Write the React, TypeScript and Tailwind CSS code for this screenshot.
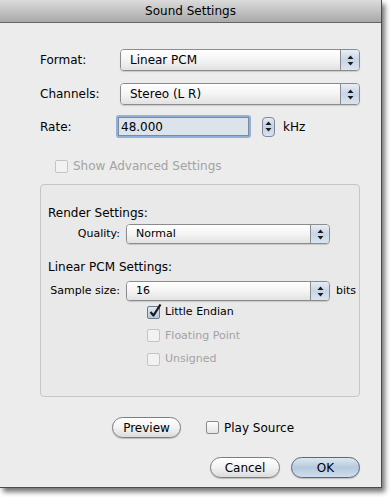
import React from "react";

const ui = "font-['Lucida_Grande','DejaVu_Sans',sans-serif]";

function Arrows({ size = 6 }: { size?: number }) {
  return (
    <svg width={size + 1} height={11} viewBox="0 0 7 11">
      <path d="M3.5 0.5 L6.5 4 L0.5 4 Z" fill="#1c1c1c" />
      <path d="M0.5 7 L6.5 7 L3.5 10.5 Z" fill="#1c1c1c" />
    </svg>
  );
}

function Popup({
  text,
  width,
  small,
}: {
  text: string;
  width: string;
  small?: boolean;
}) {
  return (
    <div
      className={`flex overflow-hidden rounded-[4px] border border-[#8b8b8b] shadow-[0_1px_1px_rgba(0,0,0,0.15)] ${width} ${
        small ? "h-[20px]" : "h-[22px]"
      }`}
    >
      <div
        className={`flex flex-1 items-center bg-gradient-to-b from-white via-[#f4f4f4] to-[#e2e2e2] text-black ${
          small ? "pl-[9px] text-[11px]" : "pl-[9px] text-[12px]"
        }`}
      >
        {text}
      </div>
      <div className="flex w-[19px] items-center justify-center border-l border-[#8b8b8b] bg-gradient-to-b from-[#e8eef6] via-[#c7d5e6] to-[#dbe5f1]">
        <Arrows />
      </div>
    </div>
  );
}

function Check({
  label,
  checked,
  disabled,
  small,
}: {
  label: string;
  checked?: boolean;
  disabled?: boolean;
  small?: boolean;
}) {
  return (
    <div className={`flex items-center gap-[5px] ${small ? "text-[11px]" : "text-[12px]"}`}>
      <div
        className={`relative h-[13px] w-[13px] rounded-[2px] border ${
          disabled
            ? "border-[#c4c4c4] bg-[#f2f2f2]"
            : checked
            ? "border-[#6f7a88] bg-gradient-to-b from-[#dfe8f3] to-[#b8c8dc]"
            : "border-[#8b8b8b] bg-gradient-to-b from-white to-[#e4e4e4]"
        }`}
      >
        {checked && (
          <svg
            className="absolute -top-[3px] left-[1px]"
            width="13"
            height="14"
            viewBox="0 0 13 14"
          >
            <path
              d="M1.5 8 L4.5 11.5 L11.5 0.5"
              fill="none"
              stroke="#1a1a1a"
              strokeWidth="2.2"
              strokeLinejoin="round"
            />
          </svg>
        )}
      </div>
      <span className={disabled ? "text-[#a3a3a3]" : "text-black"}>{label}</span>
    </div>
  );
}

function Button({ label, primary, width }: { label: string; primary?: boolean; width: string }) {
  return (
    <div
      className={`flex h-[21px] items-center justify-center rounded-full border text-[12px] text-black shadow-[0_1px_1px_rgba(0,0,0,0.2)] ${width} ${
        primary
          ? "border-[#5a6878] bg-gradient-to-b from-[#dde7f2] via-[#b7c9dd] to-[#cfdeee]"
          : "border-[#7d7d7d] bg-gradient-to-b from-white via-[#f2f2f2] to-[#dcdcdc]"
      }`}
    >
      {label}
    </div>
  );
}

export default function App() {
  return (
    <div className={`h-[497px] w-[390px] bg-white ${ui}`}>
      <div className="flex h-[488px] w-[382px] flex-col border-r border-b border-[#4a4a4a] bg-[#ececec] shadow-[3px_4px_5px_rgba(0,0,0,0.55)]">
        {/* title bar */}
        <div className="flex h-[23px] items-center justify-center border-b border-[#646464] bg-gradient-to-b from-[#dcdcdc] to-[#a9a9a9] text-[12px] text-black">
          Sound Settings
        </div>

        <div className="flex flex-col pl-[40px]">
          <div className="mt-[26px] flex items-center">
            <span className="w-[80px] text-[12px]">Format:</span>
            <Popup text="Linear PCM" width="w-[240px]" />
          </div>
          <div className="mt-[12px] flex items-center">
            <span className="w-[80px] text-[12px]">Channels:</span>
            <Popup text="Stereo (L R)" width="w-[240px]" />
          </div>
          <div className="mt-[10px] flex items-center">
            <span className="w-[76px] text-[12px]">Rate:</span>
            <div className="rounded-[3px] bg-[#8fb0d8] p-[2px]">
              <div className="flex h-[19px] w-[131px] items-center border border-[#7f8a96] bg-[#dce3ea] pl-[2px] text-[12px]">
                48.000
              </div>
            </div>
            <div className="ml-[11px] flex h-[20px] w-[13px] items-center justify-center rounded-[4px] border border-[#7e8896] bg-gradient-to-b from-[#e3ebf4] via-[#c2d1e3] to-[#d9e3ef]">
              <Arrows />
            </div>
            <span className="ml-[8px] text-[12px]">kHz</span>
          </div>

          <div className="ml-[15px] mt-[19px]">
            <Check label="Show Advanced Settings" disabled />
          </div>

          {/* group box */}
          <div className="mt-[9px] flex h-[213px] w-[320px] flex-col rounded-[4px] border border-[#c6c6c6] bg-[#e9e9e9] pl-[7px]">
            <div className="mt-[19px] text-[12px]">Render Settings:</div>
            <div className="mt-[2px] flex items-center">
              <span className="w-[78px] pr-[6px] text-right text-[11px]">Quality:</span>
              <Popup text="Normal" width="w-[204px]" small />
            </div>
            <div className="mt-[14px] text-[12px]">Linear PCM Settings:</div>
            <div className="mt-[5px] flex items-center">
              <span className="w-[78px] pr-[6px] text-right text-[11px]">Sample size:</span>
              <Popup text="16" width="w-[204px]" small />
              <span className="ml-[6px] text-[11px]">bits</span>
            </div>
            <div className="ml-[99px] mt-[3px] flex flex-col gap-[7px]">
              <Check label="Little Endian" checked small />
              <Check label="Floating Point" disabled small />
              <Check label="Unsigned" disabled small />
            </div>
          </div>

          <div className="mt-[20px] flex items-center">
            <div className="ml-[72px]">
              <Button label="Preview" width="w-[69px]" />
            </div>
            <div className="ml-[25px]">
              <Check label="Play Source" />
            </div>
          </div>

          <div className="mt-[19px] flex items-center">
            <div className="ml-[170px]">
              <Button label="Cancel" width="w-[70px]" />
            </div>
            <div className="ml-[11px]">
              <Button label="OK" primary width="w-[69px]" />
            </div>
          </div>
        </div>
      </div>
    </div>
  );
}
